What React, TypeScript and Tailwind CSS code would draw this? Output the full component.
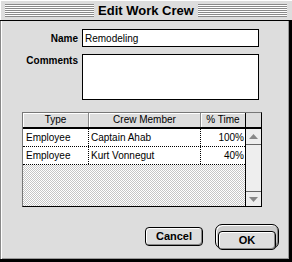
import React from "react";

const crew = [
  { type: "Employee", name: "Captain Ahab", time: "100%" },
  { type: "Employee", name: "Kurt Vonnegut", time: "40%" },
];

const Stripes = () => (
  <div className="flex-1 h-[13px] bg-[repeating-linear-gradient(to_bottom,#8a8a8a_0_1px,#ffffff_1px_2px)]" />
);

// 1px checker stipple used for the empty part of the list
const Stipple = () => (
  <svg width="222" height="41" className="block" shapeRendering="crispEdges">
    <defs>
      <pattern id="stipple" width="2" height="2" patternUnits="userSpaceOnUse">
        <rect width="2" height="2" fill="#ffffff" />
        <rect x="0" y="0" width="1" height="1" fill="#c6c6c6" />
        <rect x="1" y="1" width="1" height="1" fill="#c6c6c6" />
      </pattern>
    </defs>
    <rect width="222" height="41" fill="url(#stipple)" />
  </svg>
);

export default function App() {
  return (
    <div className="w-[292px] h-[262px] flex flex-col bg-[#dddddd] text-black overflow-hidden font-['Liberation_Sans',Arial,sans-serif]">
      {/* Title bar */}
      <div className="h-[21px] shrink-0 flex items-center gap-[3px] pl-[5px] pr-[5px] border-b border-black shadow-[inset_1px_1px_0_#fff]">
        <Stripes />
        <span className="text-[13px] font-bold leading-none px-[1px]">Edit Work Crew</span>
        <Stripes />
      </div>

      {/* Body */}
      <div className="flex-1 flex flex-col border-r-[3px] border-b-[3px] border-black shadow-[inset_1px_0_0_#888,inset_2px_0_0_#fff,inset_-1px_-1px_0_#999]">
        {/* Name */}
        <div className="mt-[8px] flex items-center gap-[4px]">
          <label className="w-[78px] text-right text-[10px] font-bold">Name</label>
          <div className="w-[177px] h-[18px] bg-white border border-black flex items-center px-[2px] text-[10px]">
            Remodeling
          </div>
        </div>

        {/* Comments */}
        <div className="mt-[7px] flex items-start gap-[4px]">
          <label className="w-[78px] text-right text-[10px] font-bold leading-[12px] pt-[1px]">Comments</label>
          <div className="w-[177px] h-[46px] bg-white border border-black" />
        </div>

        {/* Crew table */}
        <div className="mt-[12px] ml-[22px] w-[240px] h-[95px] flex flex-col border-l border-t border-l-[#777] border-t-[#777] border-r border-b border-r-black border-b-black">
          <div className="h-[16px] flex border-b-2 border-black text-[10px] leading-none">
            <div className="w-[66px] flex items-center justify-center border-r border-[#888] shadow-[inset_1px_1px_0_#fff]">Type</div>
            <div className="w-[112px] flex items-center justify-center border-r border-[#888] shadow-[inset_1px_1px_0_#fff]">Crew Member</div>
            <div className="w-[44px] flex items-center justify-center shadow-[inset_1px_1px_0_#fff]">% Time</div>
            <div className="w-[16px] border-l border-black" />
          </div>
          <div className="h-[77px] flex">
            <div className="w-[222px] flex flex-col">
              {crew.map((c) => (
                <div key={c.name} className="h-[18px] shrink-0 flex bg-white border-b border-dotted border-black text-[10px]">
                  <div className="w-[66px] flex items-center pl-[3px] border-r border-dotted border-black">{c.type}</div>
                  <div className="w-[112px] flex items-center pl-[2px] border-r border-dotted border-black">{c.name}</div>
                  <div className="w-[44px] flex items-center justify-end pr-[1px]">{c.time}</div>
                </div>
              ))}
              <div className="h-[41px] overflow-hidden">
                <Stipple />
              </div>
            </div>
            <div className="w-[16px] flex flex-col border-l border-black bg-[#eeeeee]">
              <div className="h-[16px] flex items-center justify-center border-b border-[#666]">
                <svg width="9" height="5" viewBox="0 0 9 5"><polygon points="4.5,0 9,5 0,5" fill="#888" /></svg>
              </div>
              <div className="flex-1" />
              <div className="h-[15px] flex items-center justify-center border-t border-[#666]">
                <svg width="9" height="5" viewBox="0 0 9 5"><polygon points="0,0 9,0 4.5,5" fill="#888" /></svg>
              </div>
            </div>
          </div>
        </div>

        {/* Buttons */}
        <div className="mt-[17px] flex items-center justify-end gap-[12px] pr-[10px]">
          <button className="w-[58px] h-[19px] rounded-[4px] border border-black bg-[#dddddd] text-[11px] font-bold leading-none shadow-[inset_1px_1px_0_#fff,inset_-1px_-1px_0_#888]">
            Cancel
          </button>
          <div className="w-[64px] h-[25px] rounded-[7px] border border-black bg-[#cccccc] p-[2px] shadow-[inset_1px_1px_0_#fff,inset_-1px_-1px_0_#888]">
            <button className="w-full h-full rounded-[4px] border border-black bg-[#dddddd] text-[11px] font-bold leading-none shadow-[inset_1px_1px_0_#fff,inset_-1px_-1px_0_#888]">
              OK
            </button>
          </div>
        </div>
      </div>
    </div>
  );
}
